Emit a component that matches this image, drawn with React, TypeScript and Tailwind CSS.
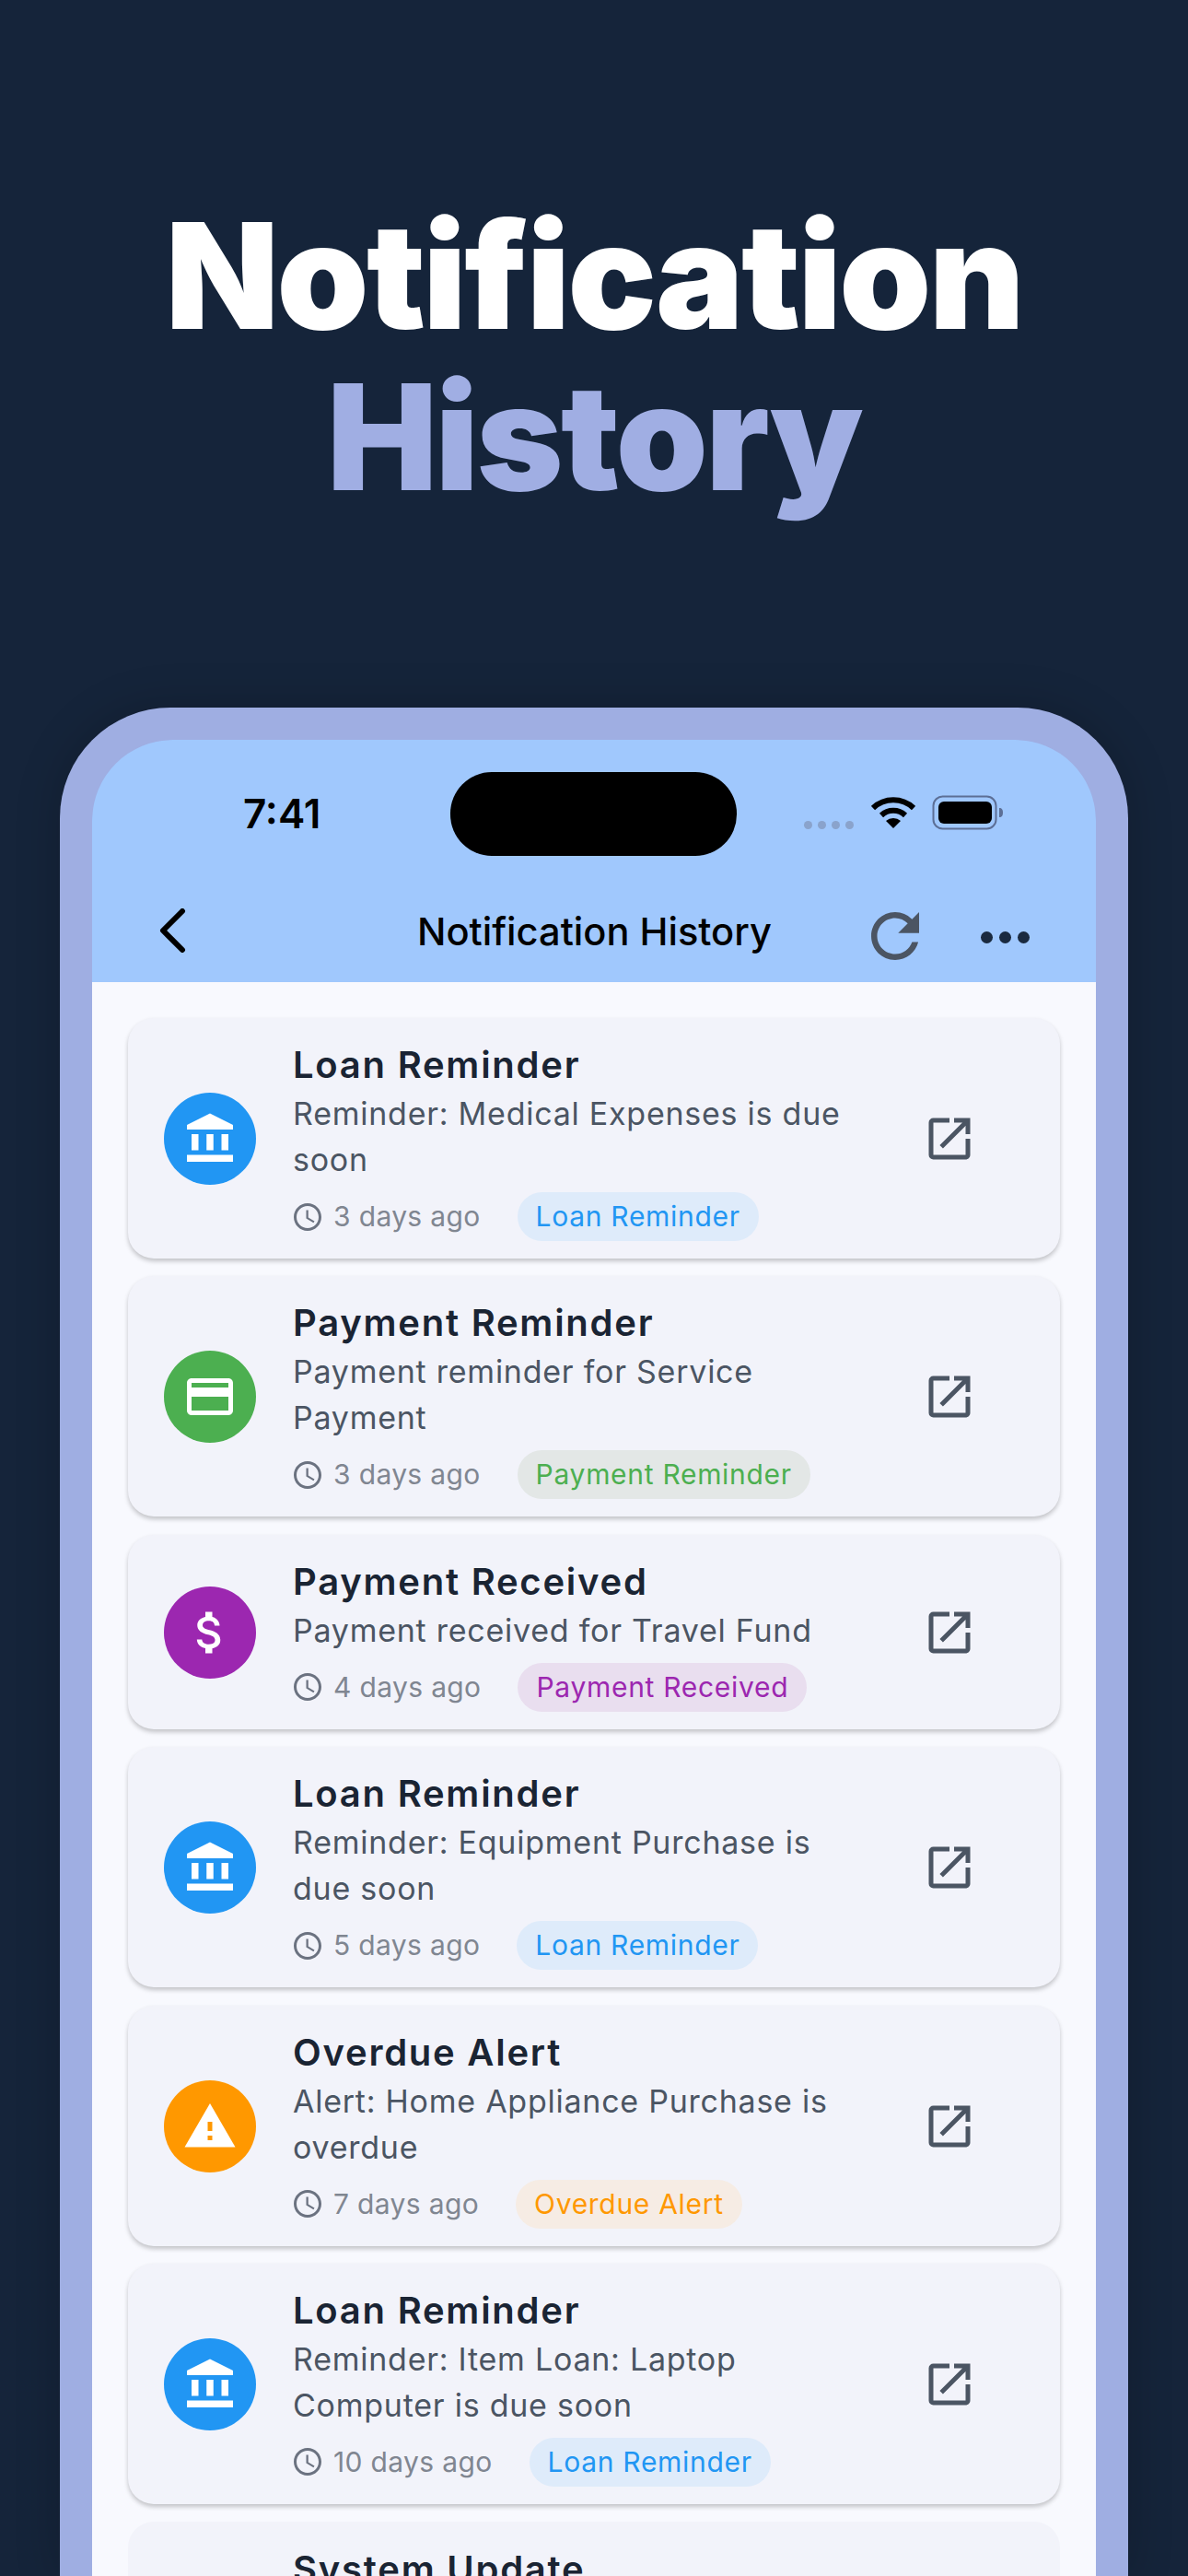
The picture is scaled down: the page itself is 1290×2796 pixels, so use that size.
import React from "react";
import { MdAccountBalance, MdCreditCard, MdAttachMoney, MdWarning, MdOpenInNew, MdAccessTime, MdRefresh } from "react-icons/md";

type Kind = "loan" | "pay" | "recv" | "over";

const kinds = {
  loan: { Icon: MdAccountBalance, circle: "bg-[#2196f3]", chip: "bg-[#deebfa] text-[#2196f3]", label: "Loan Reminder" },
  pay: { Icon: MdCreditCard, circle: "bg-[#4caf50]", chip: "bg-[#e3e7e6] text-[#4caf50]", label: "Payment Reminder" },
  recv: { Icon: MdAttachMoney, circle: "bg-[#9c27b0]", chip: "bg-[#e9deef] text-[#9c27b0]", label: "Payment Received" },
  over: { Icon: MdWarning, circle: "bg-[#ff9800]", chip: "bg-[#f6ece4] text-[#ff9800]", label: "Overdue Alert" },
};

const items: { kind: Kind; title: string; body: string[]; when: string }[] = [
  { kind: "loan", title: "Loan Reminder", body: ["Reminder: Medical Expenses is due", "soon"], when: "3 days ago" },
  { kind: "pay", title: "Payment Reminder", body: ["Payment reminder for Service", "Payment"], when: "3 days ago" },
  { kind: "recv", title: "Payment Received", body: ["Payment received for Travel Fund"], when: "4 days ago" },
  { kind: "loan", title: "Loan Reminder", body: ["Reminder: Equipment Purchase is", "due soon"], when: "5 days ago" },
  { kind: "over", title: "Overdue Alert", body: ["Alert: Home Appliance Purchase is", "overdue"], when: "7 days ago" },
  { kind: "loan", title: "Loan Reminder", body: ["Reminder: Item Loan: Laptop", "Computer is due soon"], when: "10 days ago" },
];

function Card({ kind, title, body, when }: (typeof items)[number]) {
  const k = kinds[kind];
  const Icon = k.Icon;
  return (
    <div className="flex shrink-0 items-center rounded-[28px] bg-[#f2f3fa] pl-[39px] pr-[90px] pt-5 pb-[19px] shadow-[0_3px_5px_rgba(0,0,0,0.22)]">
      <div className={`flex h-[100px] w-[100px] shrink-0 items-center justify-center rounded-full text-white ${k.circle}`}>
        <Icon size={60} />
      </div>
      <div className="ml-[40px] min-w-0 flex-1 pt-[3px]">
        <div className="text-[40px] leading-[56px] font-semibold tracking-[1.75px] text-[#1a2433]">{title}</div>
        {body.map((l) => (
          <div key={l} className="whitespace-nowrap text-[34px] leading-[50px] tracking-[0.75px] text-[#4b5563]">{l}</div>
        ))}
        <div className="mt-[10px] flex items-center">
          <MdAccessTime size={36} className="ml-[-2px] text-[#6b7280]" />
          <span className="ml-[10px] text-[30px] tracking-[0.35px] text-[#808691]">{when}</span>
          <span className={`ml-10 rounded-full px-5 text-[30px] leading-[53px] tracking-[0.7px] ${k.chip}`}>{k.label}</span>
        </div>
      </div>
      <MdOpenInNew size={60} className="shrink-0 text-[#4b5563]" />
    </div>
  );
}

export default function App() {
  return (
    <div className="flex h-[2796px] w-[1290px] flex-col items-center overflow-hidden bg-[#15243a] font-[Inter,sans-serif]">
      <h1 className="mt-[212px] text-center text-[160px] leading-[175px] font-black tracking-[-2.5px] text-white">
        Notification
        <br />
        <span className="text-[#a0aee3]">History</span>
      </h1>

      <div className="mt-[206px] flex w-[1160px] flex-1 flex-col overflow-hidden rounded-t-[120px] border-x-[35px] border-t-[35px] border-[#9faee2] bg-[#9faee2] shadow-[0_0_50px_rgba(0,0,0,0.2)]">
        <div className="shrink-0 rounded-t-[88px] bg-[#a0c8fd]">
          <div className="flex h-[160px] items-center pr-[100px] pl-[164px]">
            <span className="w-[225px] text-[44px] font-semibold text-black">7:41</span>
            <div className="h-[91px] w-[312px] rounded-[45px] bg-black" />
            <div className="ml-[73px] flex items-center gap-[6px] self-center">
              <div className="mt-[24px] mr-[13px] flex gap-[6px]">
                <i className="h-[9px] w-[9px] rounded-full bg-[#8aa3cc]" />
                <i className="h-[9px] w-[9px] rounded-full bg-[#8aa3cc]" />
                <i className="h-[9px] w-[9px] rounded-full bg-[#8aa3cc]" />
                <i className="h-[9px] w-[9px] rounded-full bg-[#8aa3cc]" />
              </div>
              <svg width="48" height="36" viewBox="0 0 48 36" className="mt-[-3px]">
                <path d="M2 13a32 32 0 0 1 44 0" fill="none" stroke="#000" strokeWidth="6" />
                <path d="M11 21a19 19 0 0 1 26 0" fill="none" stroke="#000" strokeWidth="6" />
                <path d="M16 27a12 12 0 0 1 16 0l-8 8z" fill="#000" />
              </svg>
              <svg width="78" height="38" viewBox="0 0 78 38" className="ml-3 mt-[-3px]">
                <rect x="1.5" y="1.5" width="68" height="35" rx="10" fill="none" stroke="#5c6f96" strokeWidth="2" />
                <rect x="7" y="7" width="58" height="24" rx="6" fill="#000" />
                <path d="M73 14c3 0 4 2 4 5s-1 5-4 5z" fill="#5c6f96" />
              </svg>
            </div>
          </div>
          <div className="flex h-[103px] items-center pr-[54px] pl-[72px]">
            <svg width="30" height="48" viewBox="0 0 30 48" className="mb-[9px]">
              <path d="M26 3 5 24l21 21" fill="none" stroke="#000" strokeWidth="6" strokeLinecap="round" strokeLinejoin="round" />
            </svg>
            <span className="ml-[251px] mb-[6px] w-[384px] whitespace-nowrap text-[41.6px] font-medium text-black">Notification History</span>
            <MdRefresh size={78} className="ml-[96px] mt-[2px] shrink-0 text-[#4b5563]" />
            <div className="ml-[54px] mt-[5px] flex gap-[7px]">
              <i className="h-[13px] w-[13px] rounded-full bg-[#1a2a3f]" />
              <i className="h-[13px] w-[13px] rounded-full bg-[#1a2a3f]" />
              <i className="h-[13px] w-[13px] rounded-full bg-[#1a2a3f]" />
            </div>
          </div>
        </div>
        <div className="flex min-h-0 flex-1 flex-col gap-[19.4px] overflow-hidden bg-[#f8f9fe] px-[39px] pt-[39px]">
          {items.map((it, i) => (
            <Card key={i} {...it} />
          ))}
          <div className="shrink-0 rounded-t-[28px] bg-[#f2f3fa] pt-[24px] pl-[179px]">
            <div className="text-[40px] leading-[56px] font-semibold tracking-[1.75px] text-[#1a2433]">System Update</div>
          </div>
        </div>
      </div>
    </div>
  );
}
